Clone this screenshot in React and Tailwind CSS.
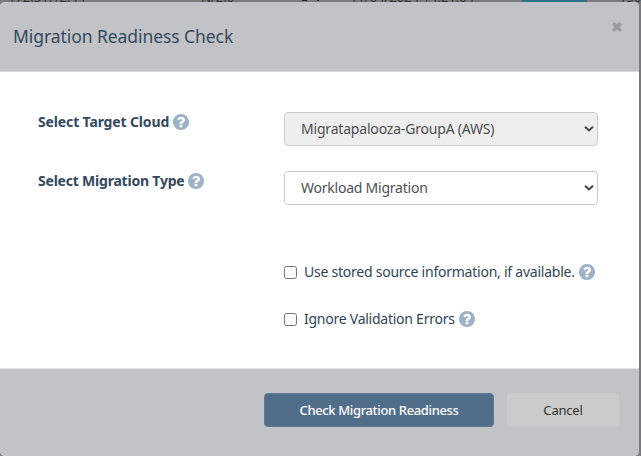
function Help() {
  return (
    <svg className="size-4 shrink-0 text-[#9db2c6]" viewBox="128 128 1536 1536" fill="currentColor">
      <path d="M1024 1376v-192q0-14-9-23t-23-9h-192q-14 0-23 9t-9 23v192q0 14 9 23t23 9h192q14 0 23-9t9-23zm256-672q0-88-55.500-163t-138.500-116-170-41q-243 0-371 213-15 24 8 42l132 100q7 6 19 6 16 0 25-12 53-68 86-92 34-24 86-24 48 0 85.500 26t37.500 59q0 38-20 61t-68 45q-63 28-115.500 86.500t-52.500 125.500v36q0 14 9 23t23 9h192q14 0 23-9t9-23q0-19 21.500-49.500t54.500-49.500q32-18 49-28.500t46-35 44.500-48 28-60.500 12.500-81zm384 192q0 209-103 385.500t-279.500 279.500-385.500 103-385.500-103-279.500-279.500-103-385.500 103-385.500 279.500-279.500 385.500-103 385.500 103 279.500 279.500 103 385.500z" />
    </svg>
  );
}

function FieldLabel({ children, className }) {
  return (
    <div className="flex h-[19px] w-[246px] items-center gap-1 text-[14px] font-bold leading-[19px] text-[#34495e]">
      <span className={"whitespace-nowrap " + className}>{children}</span>
      <Help />
    </div>
  );
}

function SelectBox({ children, className }) {
  return (
    <div className={"flex h-[34px] w-[314px] items-center justify-between rounded border border-[#cccccc] pl-[16px] pr-[3px] text-[#4f4f4f] " + className}>
      <span className="whitespace-nowrap text-[14px] leading-5">{children}</span>
      <svg width="10" height="6" viewBox="0 0 10 6" fill="none" stroke="#444444" strokeWidth="1.9">
        <path d="M1 .8 5 4.5 9 .8" />
      </svg>
    </div>
  );
}

function Check({ children, className }) {
  return (
    <div className="flex h-5 items-center">
      <span className="size-[13px] shrink-0 rounded-[2.5px] border border-[#767676] bg-white" />
      <span className={"ml-[7px] mr-1 whitespace-nowrap text-[14px] leading-5 text-[#2f4459] " + className}>{children}</span>
      <Help />
    </div>
  );
}

export default function App() {
  return (
    <div className="h-[456px] w-[641px] overflow-hidden bg-[#7b7b7b] font-['Noto_Sans','Open_Sans',sans-serif]">
      <div className="relative h-[2px] overflow-hidden text-[13px] leading-3 text-[#333333]">
        <span className="absolute left-[8px] -top-[9px] whitespace-nowrap">172.31.12.44</span>
        <span className="absolute left-[201px] -top-[9px] whitespace-nowrap">N/2.0</span>
        <span className="absolute left-[302px] top-0 h-px w-[5px] bg-[#222222]" />
        <span className="absolute left-[317px] top-0 h-px w-[2px] bg-[#222222]" />
        <span className="absolute left-[350px] -top-[9px] whitespace-nowrap">11/04/2024 14:21:04</span>
        <span className="absolute left-[522px] top-0 h-[2px] w-[65px] bg-[#2b7287]" />
        <span className="absolute left-[619px] -top-[9px] whitespace-nowrap">156</span>
      </div>
      <div className="flex h-[454px] w-[639px] flex-col overflow-hidden rounded-[5px] bg-white">
        <header className="flex h-[70px] shrink-0 items-center justify-between border-b border-[#d8d8db] bg-[#c2c3c7] pl-[13px] pr-[17px]">
          <h1 className="mb-px whitespace-nowrap text-[17.5px] leading-6 tracking-[-0.07px] text-[#34495e]">Migration Readiness Check</h1>
          <svg className="mb-[20px]" width="10" height="10" viewBox="0 0 10 10" stroke="#999a9d" strokeWidth="3.3">
            <path d="m1.2 1.2 7.6 7.6m0-7.6L1.2 8.8" />
          </svg>
        </header>
        <main className="flex h-[297px] shrink-0 flex-col border-b border-[#e5e5e5] pl-[38px] pt-10">
          <div className="flex h-[34px]">
            <FieldLabel className="tracking-[-0.14px]">Select Target Cloud</FieldLabel>
            <SelectBox className="bg-[#eeeeee] tracking-[-0.19px]">Migratapalooza-GroupA (AWS)</SelectBox>
          </div>
          <div className="mt-[25px] flex h-[34px]">
            <FieldLabel className="tracking-[-0.21px]">Select Migration Type</FieldLabel>
            <SelectBox className="bg-white tracking-[-0.23px]">Workload Migration</SelectBox>
          </div>
          <div className="ml-[246px] mt-[57px] flex flex-col gap-[27px]">
            <Check className="tracking-[-0.24px]">Use stored source information, if available.</Check>
            <Check className="tracking-[-0.25px]">Ignore Validation Errors</Check>
          </div>
        </main>
        <footer className="flex grow justify-end gap-[13px] bg-[#c2c3c7] pr-5 pt-[24px] text-[13px]">
          <button className="h-[34px] w-[230px] whitespace-nowrap rounded border border-[#5b7894] bg-[#506e8a] pt-px font-medium tracking-[-0.36px] text-white">Check Migration Readiness</button>
          <button className="h-[34px] w-[112px] rounded bg-[#cbcbcb] pt-[2px] tracking-[-0.2px] text-[#333333]">Cancel</button>
        </footer>
      </div>
    </div>
  );
}
